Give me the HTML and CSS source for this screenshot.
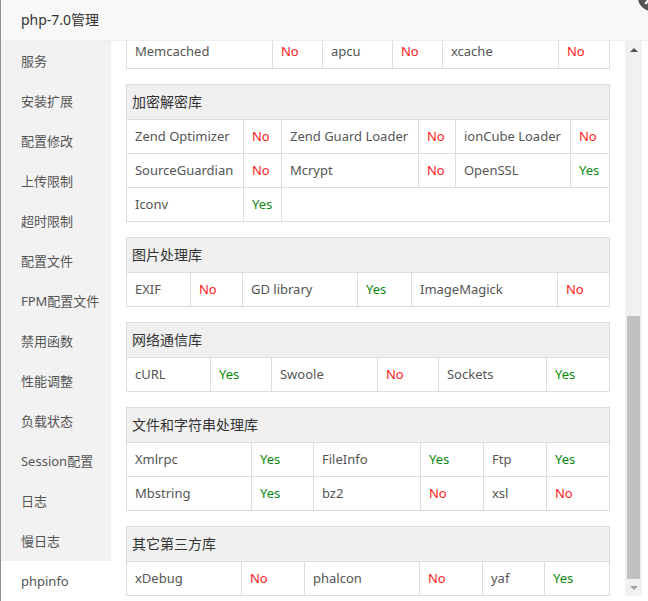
FILE: index.html
```html
<!DOCTYPE html>
<html lang="zh-CN">
<head>
    <meta charset="UTF-8">
    <title>php-7.0管理</title>
    <link rel="stylesheet" href="styles.css">
</head>
<body>
    <div class="backdrop"></div>
    <div class="dialog">
        <div class="title">php-7.0管理</div>
        <span class="close">
            <svg width="32" height="32" viewBox="0 0 32 32">
                <circle cx="16" cy="16" r="15" fill="#555" stroke="#fff" stroke-width="1.5"/>
                <path d="M10 10 L22 22 M22 10 L10 22" stroke="#fff" stroke-width="2.5" stroke-linecap="round"/>
            </svg>
        </span>
        <div class="body">
            <ul class="side">
                <li>服务</li>
                <li>安装扩展</li>
                <li>配置修改</li>
                <li>上传限制</li>
                <li>超时限制</li>
                <li>配置文件</li>
                <li>FPM配置文件</li>
                <li>禁用函数</li>
                <li>性能调整</li>
                <li>负载状态</li>
                <li>Session配置</li>
                <li>日志</li>
                <li>慢日志</li>
                <li class="active">phpinfo</li>
            </ul>
            <div class="main">
                <div class="view">
                    <!-- 缓存 -->
                    <table class="lib">
                        <colgroup><col width="146"><col width="50"><col width="70"><col width="50"><col width="116"><col width="51"></colgroup>
                        <tr>
                            <td>Memcached</td><td class="no">No</td>
                            <td>apcu</td><td class="no">No</td>
                            <td>xcache</td><td class="no">No</td>
                        </tr>
                    </table>

                    <table class="lib">
                        <colgroup><col width="117"><col width="38"><col width="137"><col width="37"><col width="115"><col width="39"></colgroup>
                        <tr><th colspan="6">加密解密库</th></tr>
                        <tr>
                            <td>Zend Optimizer</td><td class="no">No</td>
                            <td>Zend Guard Loader</td><td class="no">No</td>
                            <td>ionCube Loader</td><td class="no">No</td>
                        </tr>
                        <tr>
                            <td>SourceGuardian</td><td class="no">No</td>
                            <td>Mcrypt</td><td class="no">No</td>
                            <td>OpenSSL</td><td class="yes">Yes</td>
                        </tr>
                        <tr>
                            <td>Iconv</td><td class="yes">Yes</td>
                            <td colspan="4"></td>
                        </tr>
                    </table>

                    <table class="lib">
                        <colgroup><col width="64"><col width="52"><col width="115"><col width="54"><col width="146"><col width="52"></colgroup>
                        <tr><th colspan="6">图片处理库</th></tr>
                        <tr>
                            <td>EXIF</td><td class="no">No</td>
                            <td>GD library</td><td class="yes">Yes</td>
                            <td>ImageMagick</td><td class="no">No</td>
                        </tr>
                    </table>

                    <table class="lib">
                        <colgroup><col width="84"><col width="61"><col width="106"><col width="61"><col width="108"><col width="63"></colgroup>
                        <tr><th colspan="6">网络通信库</th></tr>
                        <tr>
                            <td>cURL</td><td class="yes">Yes</td>
                            <td>Swoole</td><td class="no">No</td>
                            <td>Sockets</td><td class="yes">Yes</td>
                        </tr>
                    </table>

                    <table class="lib">
                        <colgroup><col width="125"><col width="62"><col width="107"><col width="63"><col width="63"><col width="63"></colgroup>
                        <tr><th colspan="6">文件和字符串处理库</th></tr>
                        <tr>
                            <td>Xmlrpc</td><td class="yes">Yes</td>
                            <td>FileInfo</td><td class="yes">Yes</td>
                            <td>Ftp</td><td class="yes">Yes</td>
                        </tr>
                        <tr>
                            <td>Mbstring</td><td class="yes">Yes</td>
                            <td>bz2</td><td class="no">No</td>
                            <td>xsl</td><td class="no">No</td>
                        </tr>
                    </table>

                    <table class="lib">
                        <colgroup><col width="115"><col width="63"><col width="115"><col width="63"><col width="62"><col width="65"></colgroup>
                        <tr><th colspan="6">其它第三方库</th></tr>
                        <tr>
                            <td>xDebug</td><td class="no">No</td>
                            <td>phalcon</td><td class="no">No</td>
                            <td>yaf</td><td class="yes">Yes</td>
                        </tr>
                    </table>
                </div>
                <div class="scrollbar">
                    <span class="arrow up"></span>
                    <div class="track"><div class="thumb"></div></div>
                    <span class="arrow down"></span>
                </div>
            </div>
        </div>
    </div>
</body>
</html>
```

FILE: styles.css
```css
html, body {
    margin: 0;
    height: 100%;
    overflow: hidden;
}
body {
    display: flex;
    font-family: "Noto Sans", "Noto Sans CJK SC", sans-serif;
    background: #fff;
}
.backdrop {
    width: 2px;
    background: #8e9094;
}
.dialog {
    flex: 1;
    display: flex;
    flex-direction: column;
    position: relative;
    background: #fff;
}
.title {
    height: 40px;
    line-height: 40px;
    padding-left: 20px;
    font-size: 14px;
    color: #333;
    background: #f8f8f8;
    border-bottom: 1px solid #eee;
}
.close {
    position: absolute;
    top: -19px;
    right: -20px;
}
.body {
    flex: 1;
    display: flex;
    min-height: 0;
}
.side {
    width: 110px;
    margin: 0;
    padding: 0;
    list-style: none;
    background: #f2f2f2;
}
.side li {
    height: 40px;
    line-height: 40px;
    padding-left: 20px;
    font-size: 13px;
    color: #555;
}
.side li.active {
    background: #fff;
}
.main {
    flex: 1;
    display: flex;
    padding: 0 6px 5px 0;
    min-width: 0;
}
.view {
    flex: 1;
    display: flex;
    flex-direction: column;
    justify-content: flex-end;
    overflow: hidden;
    padding: 0 15px;
}
table.lib {
    width: 100%;
    flex-shrink: 0;
    table-layout: fixed;
    border-collapse: separate;
    border-spacing: 0;
    border-top: 1px solid #ddd;
    border-left: 1px solid #ddd;
    margin-top: 15px;
    font-size: 13px;
    color: #555;
}
.lib th, .lib td {
    border-right: 1px solid #ddd;
    border-bottom: 1px solid #ddd;
    white-space: nowrap;
    overflow: hidden;
}
.lib th {
    height: 34px;
    line-height: 34px;
    padding: 0 5px;
    text-align: left;
    font-weight: normal;
    font-size: 14px;
    color: #333;
    background: #f0f0f0;
}
.lib td {
    height: 33px;
    line-height: 33px;
    padding: 0 8px;
}
.lib td.no {
    color: #ff1a1a;
}
.lib td.yes {
    color: #0a8a0a;
}
.scrollbar {
    width: 17px;
    display: flex;
    flex-direction: column;
    background: #f1f1f1;
}
.arrow {
    height: 17px;
    display: flex;
    align-items: center;
    justify-content: center;
}
.arrow::before {
    content: "";
    border-left: 4px solid transparent;
    border-right: 4px solid transparent;
}
.arrow.up::before {
    border-bottom: 4px solid #505050;
}
.arrow.down::before {
    border-top: 4px solid #a3a3a3;
}
.track {
    flex: 1;
    display: flex;
    flex-direction: column;
    justify-content: flex-end;
    padding: 0 2px;
}
.thumb {
    height: 263px;
    background: #c1c1c1;
}
```
